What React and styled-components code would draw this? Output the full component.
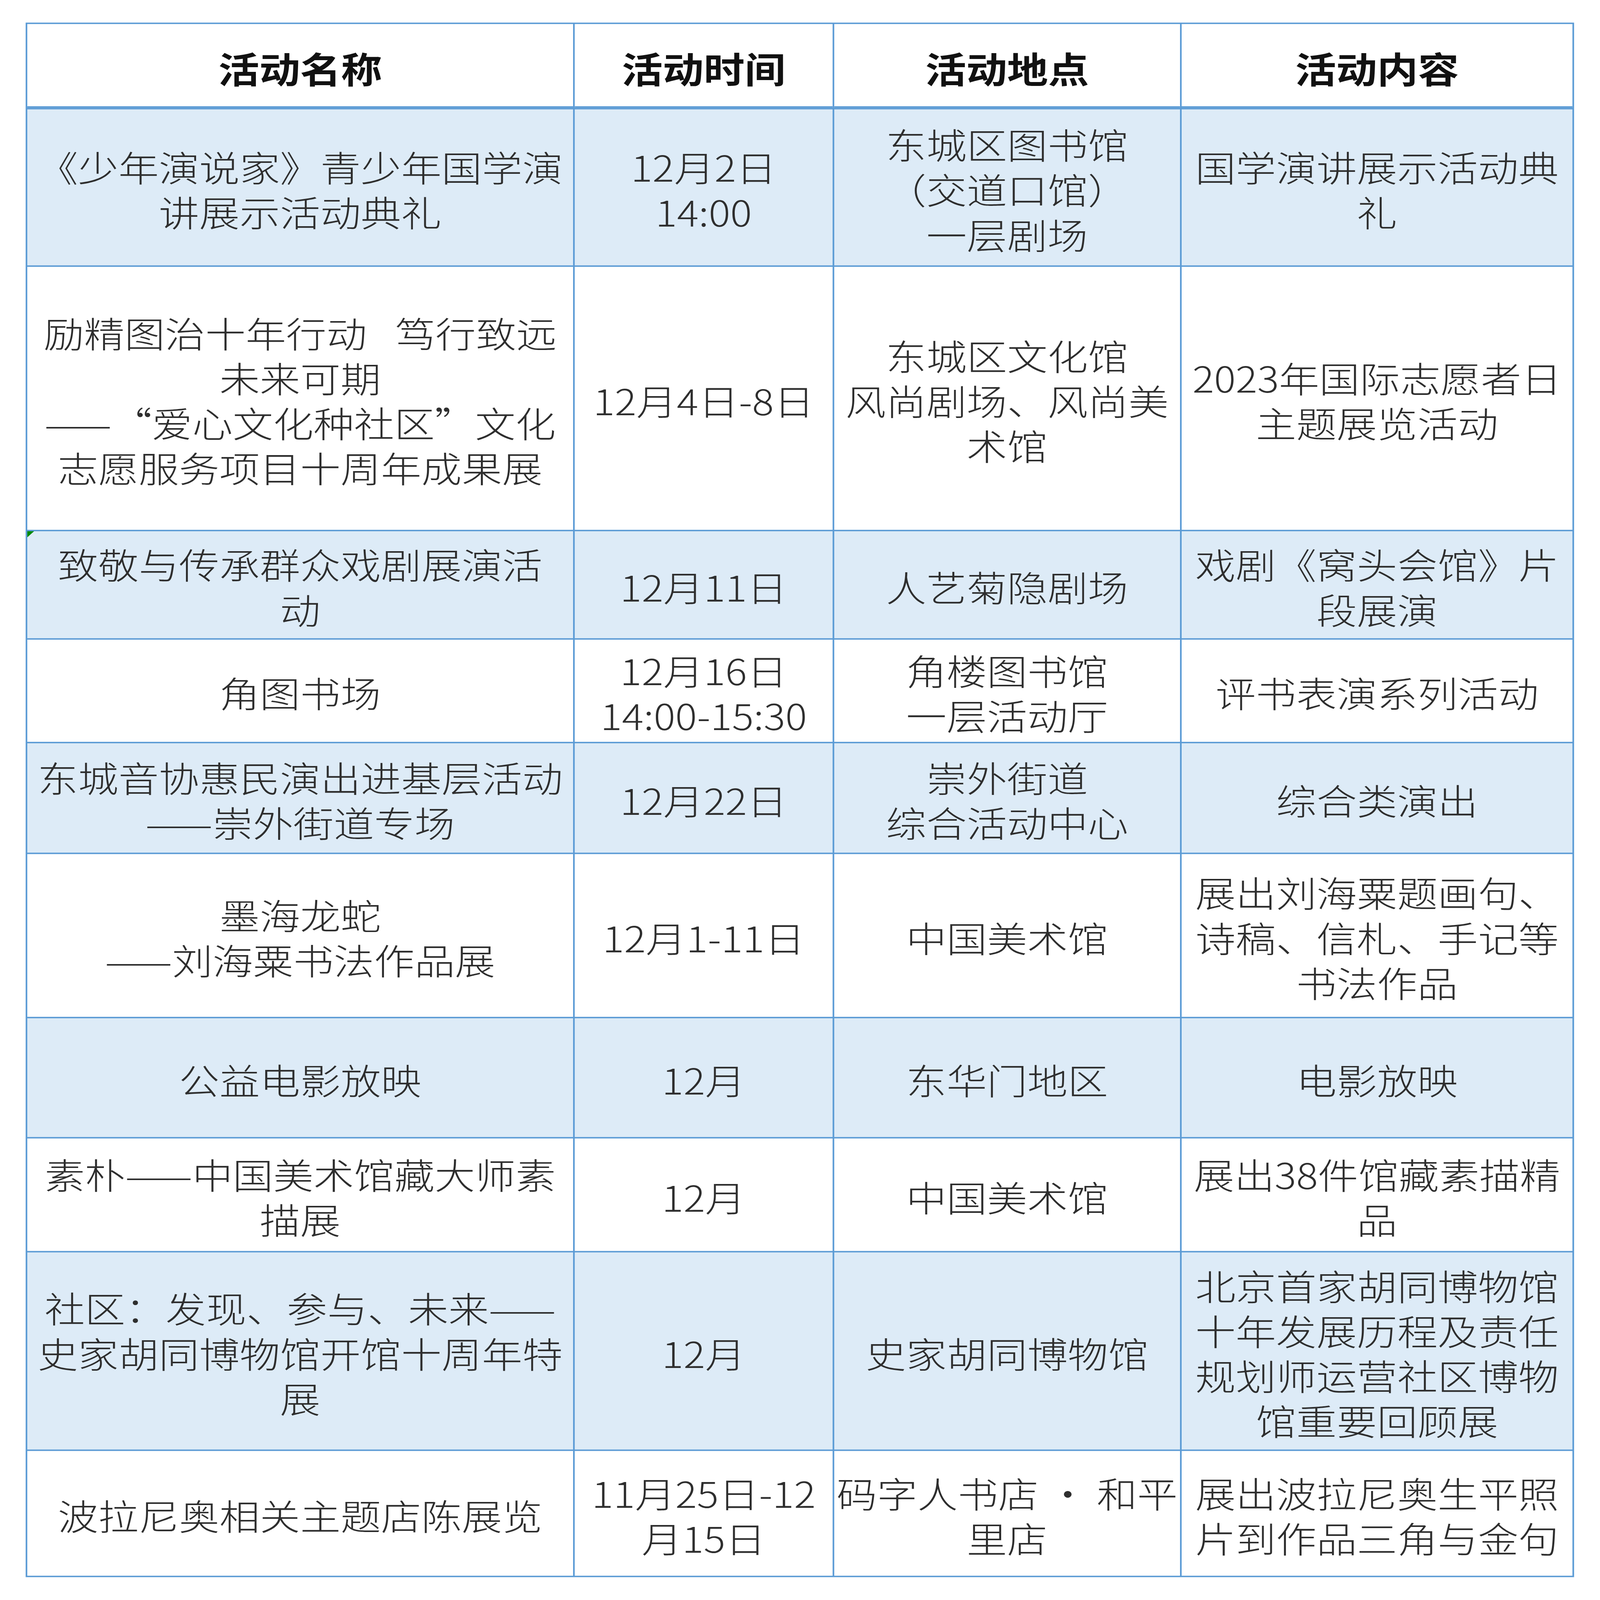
import React from "react";
import styled, { createGlobalStyle } from "styled-components";

const DESIGN_W = 5863;
const DESIGN_H = 6656;

const GlobalStyle = createGlobalStyle`
  html, body {
    margin: 0;
    padding: 0;
    background: #ffffff;
    overflow: hidden;
  }
  body {
    font-family: "Noto Sans CJK SC", "Noto Sans", sans-serif;
  }
`;

const Viewport = styled.div`
  width: 100vw;
  height: 100vh;
  overflow: hidden;
  background: #ffffff;
`;

const Page = styled.div`
  width: ${DESIGN_W}px;
  height: ${DESIGN_H}px;
  box-sizing: border-box;
  padding: 94px 0 0 94px;
  background: #ffffff;
  transform-origin: 0 0;
`;

const Grid = styled.div`
  display: grid;
  width: max-content;
  grid-template-columns: 2000px 945px 1267px 1432px;
  grid-template-rows: 349px 649px 1094px 445px 425px 455px 677px 494px 468px 820px 519px;
  gap: 6px;
  padding: 6px;
  background: #5b9bd5;
`;

const HeadCell = styled.div`
  box-sizing: border-box;
  display: flex;
  align-items: center;
  justify-content: center;
  padding-top: 18px;
  background: #ffffff;
  border-bottom: 7px solid #5b9bd5;
  font-family: "Noto Sans CJK SC", sans-serif;
  font-weight: 700;
  font-size: 150px;
  line-height: 187px;
  color: #111111;
  white-space: nowrap;
`;

const Cell = styled.div`
  position: relative;
  box-sizing: border-box;
  display: flex;
  align-items: center;
  justify-content: center;
  text-align: center;
  padding-top: 10px;
  background: ${(p) => (p.$shade ? "#ddebf7" : "#ffffff")};
  font-family: "Noto Sans CJK SC", sans-serif;
  font-weight: 300;
  font-size: 148px;
  line-height: 187px;
  color: #2e2e2e;
  white-space: nowrap;
`;

const Marker = styled.span`
  position: absolute;
  left: 0;
  top: 0;
  width: 0;
  height: 0;
  border-top: 25px solid #008a00;
  border-right: 25px solid transparent;
`;

const headers = ["活动名称", "活动时间", "活动地点", "活动内容"];

const rows = [
  [["《少年演说家》青少年国学演", "讲展示活动典礼"], ["12月2日", "14:00"], ["东城区图书馆", "（交道口馆）", "一层剧场"], ["国学演讲展示活动典", "礼"]],
  [["励精图治十年行动\u2002\u2009笃行致远", "未来可期", "——“爱心文化种社区”文化", "志愿服务项目十周年成果展"], ["12月4日-8日"], ["东城区文化馆", "风尚剧场、风尚美", "术馆"], ["2023年国际志愿者日", "主题展览活动"]],
  [["致敬与传承群众戏剧展演活", "动"], ["12月11日"], ["人艺菊隐剧场"], ["戏剧《窝头会馆》片", "段展演"]],
  [["角图书场"], ["12月16日", "14:00-15:30"], ["角楼图书馆", "一层活动厅"], ["评书表演系列活动"]],
  [["东城音协惠民演出进基层活动", "——崇外街道专场"], ["12月22日"], ["崇外街道", "综合活动中心"], ["综合类演出"]],
  [["墨海龙蛇", "——刘海粟书法作品展"], ["12月1-11日"], ["中国美术馆"], ["展出刘海粟题画句、", "诗稿、信札、手记等", "书法作品"]],
  [["公益电影放映"], ["12月"], ["东华门地区"], ["电影放映"]],
  [["素朴——中国美术馆藏大师素", "描展"], ["12月"], ["中国美术馆"], ["展出38件馆藏素描精", "品"]],
  [["社区：发现、参与、未来——", "史家胡同博物馆开馆十周年特", "展"], ["12月"], ["史家胡同博物馆"], ["北京首家胡同博物馆", "十年发展历程及责任", "规划师运营社区博物", "馆重要回顾展"]],
  [["波拉尼奥相关主题店陈展览"], ["11月25日-12", "月15日"], ["码字人书店 • 和平", "里店"], ["展出波拉尼奥生平照", "片到作品三角与金句"]],
];

function Lines({ lines }) {
  return (
    <div>
      {lines.map((l, i) => (
        <React.Fragment key={i}>
          {i > 0 && <br />}
          {l}
        </React.Fragment>
      ))}
    </div>
  );
}

function useFit() {
  const get = () => {
    if (typeof window === "undefined") return { sx: 1, sy: 1 };
    return {
      sx: Math.min(1, window.innerWidth / DESIGN_W),
      sy: Math.min(1, window.innerHeight / DESIGN_H),
    };
  };
  const [fit, setFit] = React.useState(get);
  React.useEffect(() => {
    const onResize = () => setFit(get());
    window.addEventListener("resize", onResize);
    return () => window.removeEventListener("resize", onResize);
  }, []);
  return fit;
}

export default function App() {
  const { sx, sy } = useFit();
  return (
    <>
      <GlobalStyle />
      <Viewport>
        <Page style={{ transform: `scale(${sx}, ${sy})` }}>
          <Grid>
            {headers.map((h) => (
              <HeadCell key={h}>{h}</HeadCell>
            ))}
            {rows.map((row, ri) =>
              row.map((cell, ci) => (
                <Cell key={`${ri}-${ci}`} $shade={ri % 2 === 0}>
                  {ri === 2 && ci === 0 && <Marker />}
                  <Lines lines={cell} />
                </Cell>
              ))
            )}
          </Grid>
        </Page>
      </Viewport>
    </>
  );
}
